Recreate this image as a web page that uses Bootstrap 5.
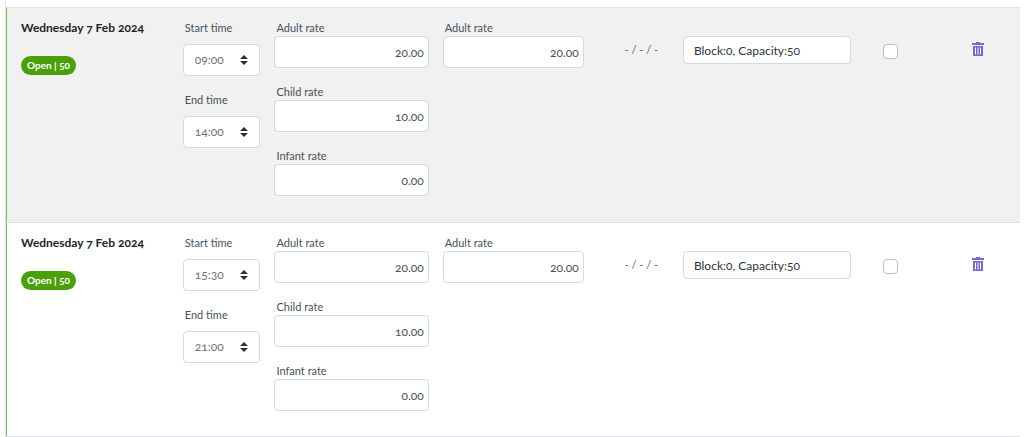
<!DOCTYPE html>
<html lang="en">
<head>
<meta charset="utf-8">
<meta name="viewport" content="width=device-width, initial-scale=1">
<title>Sessions</title>
<link href="https://cdn.jsdelivr.net/npm/bootstrap@5.3.0/dist/css/bootstrap.min.css" rel="stylesheet">
<style>
body { font-family: Lato, "Noto Sans", sans-serif; font-size: 12px; line-height: 16px; color: #212b33; background: #fff; font-variant-numeric: oldstyle-nums; }
input, select { font-variant-numeric: oldstyle-nums; }
.sessions { padding: 7px 4px 0 0; border-left: 1px solid #dfe3e2; }
.sessions-wrap { padding-left: 5px; }
.session-table { table-layout: fixed; border-left: 1px solid #7ac255; }
.session-table > tbody > tr > td { padding: 12px 7px 25px; border-top: 1px solid #dee2e6; border-bottom: 0; vertical-align: top; background: #fff; }
.session-table > tbody > tr:nth-child(odd) > td { background: #f1f1f1; padding-bottom: 26px; }
.session-table > tbody > tr > td:first-child { padding-left: 14px; }
.session-table > tbody > tr:last-child > td { border-bottom: 1px solid #dee2e6; }
.c-date { width: 16.7%; } .c-time { width: 9.05%; } .c-rate { width: 16.6%; } .c-extra { width: 15.3%; }
.c-avail { width: 8.4%; } .c-cap { width: 18%; } .c-pick { width: 6.3%; }
.session-date { font-size: 12px; line-height: 16px; }
.state { background: #4a9f0a; font-size: 10px; line-height: 11px; padding: 4px 6px; margin-top: 20px; }
.field-label { display: block; font-size: 11px; line-height: 16px; padding-left: 2px; color: #48525a; white-space: nowrap; }
.session-table .form-control, .session-table .form-select { height: 32px; font-size: 12px; line-height: 16px; border: 1px solid #d6dae2; border-radius: 4px; color: #495057; }
.session-table .form-control { padding: 7px 4px; }
.session-table .form-select { padding: 6px 24px 6px 11px; margin-top: 8px; color: #6b7178; background-position: right 11px center; background-size: 8px 10px;
  background-image: url("data:image/svg+xml,%3Csvg xmlns='http://www.w3.org/2000/svg' viewBox='0 0 8 10'%3E%3Cpath fill='%23293238' d='M4 0 8 4H0zM0 6h8L4 10z'/%3E%3C/svg%3E"); }
.session-table .capacity { height: 28px; padding: 4px 10px; margin-top: 16px; color: #2b343b; }
.avail { margin-top: 22px; color: #5a6268; font-size: 11px; }
.session-table .form-check-input { width: 15px; height: 15px; margin-top: 24px; border: 1px solid #b8bfc8; border-radius: 4px; }
.trash { margin: 22px 0 0 43px; color: #7a68c2; line-height: 0; }
</style>
</head>
<body>
<main class="sessions-wrap">
<div class="sessions">
<table class="table session-table w-100 mb-0">
<colgroup><col class="c-date"><col class="c-time"><col class="c-rate"><col class="c-extra"><col class="c-avail"><col class="c-cap"><col class="c-pick"><col></colgroup>
<tbody>
<tr>
<td><div class="session-date fw-bold text-nowrap">Wednesday 7 Feb 2024</div><span class="badge rounded-pill state">Open | 50</span></td>
<td><div class="d-grid gap-3">
<div><label class="field-label" for="s1">Start time</label><select class="form-select" id="s1"><option>09:00</option></select></div>
<div><label class="field-label" for="e1">End time</label><select class="form-select" id="e1"><option>14:00</option></select></div>
</div></td>
<td><div class="d-grid gap-3">
<div><label class="field-label" for="a1">Adult rate</label><input class="form-control text-end" id="a1" value="20.00"></div>
<div><label class="field-label" for="c1">Child rate</label><input class="form-control text-end" id="c1" value="10.00"></div>
<div><label class="field-label" for="i1">Infant rate</label><input class="form-control text-end" id="i1" value="0.00"></div>
</div></td>
<td><label class="field-label" for="x1">Adult rate</label><input class="form-control text-end" id="x1" value="20.00"></td>
<td><div class="avail text-center text-nowrap ps-3">- / - / -</div></td>
<td><input class="form-control capacity" aria-label="Block and capacity" value="Block:0, Capacity:50"></td>
<td class="text-center"><input class="form-check-input" type="checkbox" aria-label="Select session"></td>
<td><button type="button" class="btn p-0 border-0 trash" aria-label="Delete session"><svg width="12" height="14" viewBox="0 0 12 14" fill="currentColor"><path d="M4 0h4v1h4v2H0V1h4z"/><path fill-rule="evenodd" d="M1 4h10v10H1zM3 5.5v7h1v-7zM5.5 5.5v7h1v-7zM8 5.5v7h1v-7z"/></svg></button></td>
</tr>
<tr>
<td><div class="session-date fw-bold text-nowrap">Wednesday 7 Feb 2024</div><span class="badge rounded-pill state">Open | 50</span></td>
<td><div class="d-grid gap-3">
<div><label class="field-label" for="s2">Start time</label><select class="form-select" id="s2"><option>15:30</option></select></div>
<div><label class="field-label" for="e2">End time</label><select class="form-select" id="e2"><option>21:00</option></select></div>
</div></td>
<td><div class="d-grid gap-3">
<div><label class="field-label" for="a2">Adult rate</label><input class="form-control text-end" id="a2" value="20.00"></div>
<div><label class="field-label" for="c2">Child rate</label><input class="form-control text-end" id="c2" value="10.00"></div>
<div><label class="field-label" for="i2">Infant rate</label><input class="form-control text-end" id="i2" value="0.00"></div>
</div></td>
<td><label class="field-label" for="x2">Adult rate</label><input class="form-control text-end" id="x2" value="20.00"></td>
<td><div class="avail text-center text-nowrap ps-3">- / - / -</div></td>
<td><input class="form-control capacity" aria-label="Block and capacity" value="Block:0, Capacity:50"></td>
<td class="text-center"><input class="form-check-input" type="checkbox" aria-label="Select session"></td>
<td><button type="button" class="btn p-0 border-0 trash" aria-label="Delete session"><svg width="12" height="14" viewBox="0 0 12 14" fill="currentColor"><path d="M4 0h4v1h4v2H0V1h4z"/><path fill-rule="evenodd" d="M1 4h10v10H1zM3 5.5v7h1v-7zM5.5 5.5v7h1v-7zM8 5.5v7h1v-7z"/></svg></button></td>
</tr>
</tbody>
</table>
</div>
</main>
<script src="https://cdn.jsdelivr.net/npm/bootstrap@5.3.0/dist/js/bootstrap.bundle.min.js"></script>
</body>
</html>
